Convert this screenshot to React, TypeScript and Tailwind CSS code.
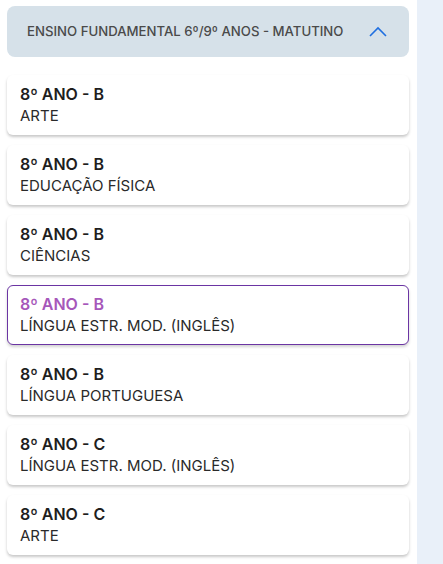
import React from "react";

const items: { t: string; s: string; active?: boolean }[] = [
  { t: "8º ANO - B", s: "ARTE" },
  { t: "8º ANO - B", s: "EDUCAÇÃO FÍSICA" },
  { t: "8º ANO - B", s: "CIÊNCIAS" },
  { t: "8º ANO - B", s: "LÍNGUA ESTR. MOD. (INGLÊS)", active: true },
  { t: "8º ANO - B", s: "LÍNGUA PORTUGUESA" },
  { t: "8º ANO - C", s: "LÍNGUA ESTR. MOD. (INGLÊS)" },
  { t: "8º ANO - C", s: "ARTE" },
];

export default function App() {
  return (
    <div className="flex h-[564px] w-[443px] overflow-hidden bg-white font-['Inter',sans-serif]">
      <div className="w-[417px] shrink-0 pl-[7px] pr-[8px] pt-[6px]">
        <div className="flex h-[51px] items-center justify-between rounded-[8px] bg-[#d6e1e9] pl-[20px] pr-[22px]">
          <span className="text-[13.2px] font-medium text-[#4a4a4a]">
            ENSINO FUNDAMENTAL 6º/9º ANOS - MATUTINO
          </span>
          <svg width="18" height="11" viewBox="0 0 18 11" fill="none">
            <path d="M1 10 L9 2 L17 10" stroke="#1f6fe0" strokeWidth="1.6" />
          </svg>
        </div>
        <div className="mt-[18px] flex flex-col gap-[10px]">
          {items.map((it, i) => (
            <div
              key={i}
              className={
                it.active
                  ? "flex h-[60px] flex-col justify-center rounded-[6px] border border-[#6b35a3] bg-white px-[12px] pb-[1px] shadow-[0_2px_3px_rgba(0,0,0,0.18)]"
                  : "flex h-[60px] flex-col justify-center rounded-[6px] border border-transparent bg-white px-[12px] pb-[1px] shadow-[0_2px_3px_rgba(0,0,0,0.22)]"
              }
            >
              <div
                className={
                  it.active
                    ? "text-[16px] font-semibold leading-[22px] text-[#a657ba]"
                    : "text-[16px] font-semibold leading-[22px] text-[#1e1e1e]"
                }
              >
                {it.t}
              </div>
              <div className="text-[15px] leading-[22px] text-[#2a2a2a]">{it.s}</div>
            </div>
          ))}
        </div>
      </div>
      <div className="flex-1 bg-[#e9f0f9]" />
    </div>
  );
}
